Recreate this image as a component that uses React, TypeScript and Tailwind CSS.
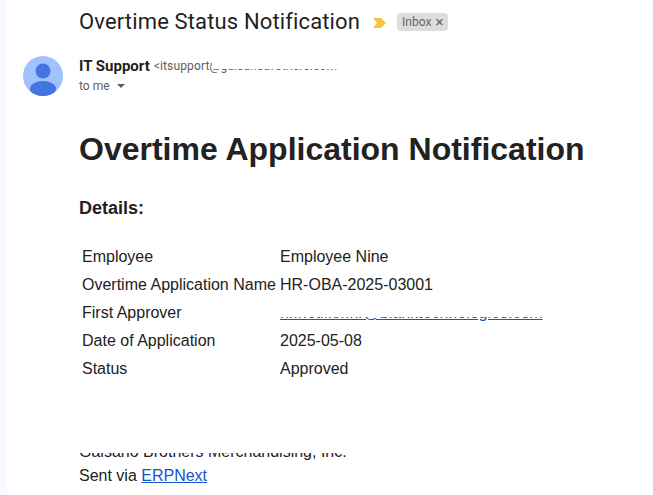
const ROWS = [
  { label: 'Employee', value: 'Employee Nine' },
  { label: 'Overtime Application Name', value: 'HR-OBA-2025-03001' },
  { label: 'First Approver', value: 'hr.notifier.hr@blanktechnologies.com', link: true },
  { label: 'Date of Application', value: '2025-05-08' },
  { label: 'Status', value: 'Approved' },
]

export default function App() {
  return (
    <div className="flex h-[495px] w-[653px] overflow-hidden bg-white font-['Liberation_Sans',sans-serif] text-[#222222]">
      <div className="w-[7px] shrink-0 bg-[#f8faff]" />
      <div className="min-w-0 flex-1">
        {/* subject */}
        <div className="flex h-[44px] items-center pl-[72px]">
          <h2 className="font-['Roboto',sans-serif] text-[22px] leading-[28px] tracking-[0.14px] text-[#1f1f1f]">
            Overtime Status Notification
          </h2>
          <svg className="ml-[13px] mt-[1px]" width="13" height="10" viewBox="0 0 13 10">
            <path d="M0 0H8L13 5L8 10H0L4 5Z" fill="#f6c342" />
          </svg>
          <span className="ml-[11px] flex h-[18px] items-center gap-[4px] rounded-[4px] bg-[#dddddd] pl-[5px] pr-[5px] font-['Roboto',sans-serif] text-[12px] text-[#666666]">
            Inbox
            <span className="text-[15px] leading-none">×</span>
          </span>
        </div>

        {/* sender */}
        <div className="mt-[12px] flex pl-[16px]">
          <svg width="40" height="40" viewBox="0 0 40 40" className="shrink-0">
            <defs>
              <clipPath id="avatar">
                <circle cx="20" cy="20" r="20" />
              </clipPath>
            </defs>
            <g clipPath="url(#avatar)">
              <rect width="40" height="40" fill="#a0c3ff" />
              <circle cx="20" cy="15" r="7.5" fill="#4374e0" />
              <ellipse cx="20" cy="33" rx="13" ry="8" fill="#4374e0" />
            </g>
          </svg>
          <div className="ml-[16px] font-['Roboto',sans-serif]">
            <div className="flex h-[20px] items-center">
              <span className="text-[15px] font-bold text-[#1f1f1f]">IT Support</span>
              <span className="relative ml-[4px] whitespace-nowrap text-[12px] tracking-[0.15px] text-[#5e5e5e]">
                &lt;itsupport@galsanobrothers.com
                <span className="absolute left-[58px] right-0 top-0 h-[12px] bg-white" />
              </span>
            </div>
            <div className="flex h-[20px] items-center text-[12px] text-[#5e5e5e]">
              to me
              <svg className="ml-[7px]" width="8" height="4" viewBox="0 0 8 4">
                <path d="M0 0H8L4 4Z" fill="#5e5e5e" />
              </svg>
            </div>
          </div>
        </div>

        {/* body */}
        <div className="pl-[72px]">
          <h1 className="mt-[35px] text-[32px] font-bold leading-[37px]">
            Overtime Application Notification
          </h1>
          <h3 className="mt-[30px] text-[18px] font-bold leading-[21px]">Details:</h3>
          <div className="mt-[24px] pl-[3px] text-[16px]">
            {ROWS.map(row => (
              <div key={row.label} className="flex h-[28px] items-center">
                <span className="w-[198px] shrink-0">{row.label}</span>
                {row.link ? (
                  <span className="relative text-[#1155cc] underline">
                    {row.value}
                    <span className="absolute inset-x-0 top-0 h-[16px] bg-white" />
                  </span>
                ) : (
                  <span>{row.value}</span>
                )}
              </div>
            ))}
          </div>
          <div className="relative mt-[60px] text-[16px] leading-[18px]">
            Galsano Brothers Merchandising, Inc.
            <span className="absolute inset-x-0 top-0 h-[10px] bg-white" />
          </div>
          <div className="mt-[6px] text-[16px] leading-[18px]">
            Sent via <span className="text-[#1155cc] underline">ERPNext</span>
          </div>
        </div>
      </div>
    </div>
  )
}
